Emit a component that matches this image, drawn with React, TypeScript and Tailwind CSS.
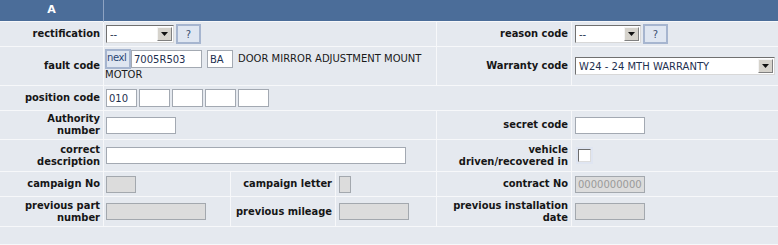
import React from "react";

const font = "font-['DejaVu_Sans',Verdana,sans-serif]";
const cellBase = "bg-[#e5e9ef] border-b border-[#f7f8fa]";
const labelCls = `${cellBase} border-r flex items-center justify-end text-right pr-[3px] font-['DejaVu_Sans_Condensed','DejaVu_Sans',sans-serif] text-[11px] font-bold leading-[12px] text-[#161616]`;
const valueCls = `${cellBase} border-r flex items-center pl-[2px]`;

function Label({ children, span = "" }: { children: React.ReactNode; span?: string }) {
  return <div className={`${labelCls} ${span}`}>{children}</div>;
}

function Value({ children, span = "", last = false, cls = "" }: { children?: React.ReactNode; span?: string; last?: boolean; cls?: string }) {
  return <div className={`${valueCls} ${span} ${last ? "border-r-0 pl-[3px]" : ""} ${cls}`}>{children}</div>;
}

function Select({ value, width }: { value: string; width: string }) {
  return (
    <div className={`${width} flex h-[18px] items-stretch border border-t-[#707070] border-l-[#707070] border-r-[#d8d8d8] border-b-[#d8d8d8] bg-white`}>
      <div className="flex flex-1 items-center overflow-hidden whitespace-nowrap pl-[3px] text-[#1e3050]">{value}</div>
      <div className="m-[1px] flex w-[15px] items-center justify-center border border-t-[#f4f4f4] border-l-[#f4f4f4] border-r-[#808080] border-b-[#808080] bg-[#d6d3cc]">
        <svg width="7" height="4" viewBox="0 0 7 4"><path d="M0 0h7L3.5 4z" fill="#111" /></svg>
      </div>
    </div>
  );
}

function HelpBtn({ cls = "" }: { cls?: string }) {
  return (
    <div className={`flex h-[20px] w-[25px] items-center justify-center border-2 border-[#a6b5cf] bg-[#dfe6f1] text-[#3a4e70] ${cls}`}>
      ?
    </div>
  );
}

function Field({ w, value = "", disabled = false, h = "h-[17px]" }: { w: string; value?: string; disabled?: boolean; h?: string }) {
  return (
    <input
      readOnly
      value={value}
      className={`${w} ${h} ${font} overflow-hidden border px-[2px] text-[10px] outline-none ${
        disabled ? "border-[#a3a8ae] bg-[#dcdcdc] text-[#9a9a9a]" : "border-[#a3a9b2] bg-white text-[#1e3050]"
      }`}
    />
  );
}

export default function App() {
  return (
    <div className={`${font} w-[778px] h-[245px] overflow-hidden bg-[#f7f8fa] text-[10px]`}>
      <div className="grid grid-cols-[104px_127px_105px_101px_135px_206px] grid-rows-[22px_25px_39px_25px_29px_32px_25px_30px_18px]">
        {/* header */}
        <div className="flex items-center justify-center border-r border-b border-r-[#8ea3c2] border-b-[#f7f8fa] bg-[#4b6d99] text-[11px] font-bold text-white">A</div>
        <div className="col-span-5 border-b border-[#f7f8fa] bg-[#4b6d99]" />

        {/* rectification */}
        <Label>rectification</Label>
        <Value span="col-span-3">
          <Select value="--" width="w-[68px]" />
          <HelpBtn cls="ml-[2px]" />
        </Value>
        <Label>reason code</Label>
        <Value last>
          <Select value="--" width="w-[66px]" />
          <HelpBtn cls="ml-[2px]" />
        </Value>

        {/* fault code */}
        <Label>fault code</Label>
        <Value span="col-span-3" cls="!block pt-[2px] pr-[2px] !pl-[1px]">
          <div className="leading-[12px]">
            <span className="inline-flex items-center align-middle">
              <span className="flex h-[20px] w-[26px] items-start overflow-hidden whitespace-nowrap border-2 border-[#a6b5cf] bg-[#dfe6f1] pt-[1px] tracking-[-0.4px] text-[#2a4575]">nexl</span>
              <Field w="w-[71px]" value="7005R503" h="h-[18px]" />
              <span className="ml-[5px]"><Field w="w-[26px]" value="BA" h="h-[18px]" /></span>
            </span>
            <span className="ml-[5px] align-middle text-[#1a1a1a]">DOOR MIRROR ADJUSTMENT MOUNT MOTOR</span>
          </div>
        </Value>
        <Label>Warranty code</Label>
        <Value last>
          <Select value="W24 - 24 MTH WARRANTY" width="w-[200px]" />
        </Value>

        {/* position code */}
        <Label>position code</Label>
        <Value span="col-span-5" last cls="!pl-[2px] gap-[2px]">
          <Field w="w-[31px]" value="010" h="h-[18px]" />
          <Field w="w-[31px]" h="h-[18px]" />
          <Field w="w-[31px]" h="h-[18px]" />
          <Field w="w-[31px]" h="h-[18px]" />
          <Field w="w-[31px]" h="h-[18px]" />
        </Value>

        {/* authority */}
        <Label>Authority<br />number</Label>
        <Value span="col-span-3">
          <Field w="w-[70px]" />
        </Value>
        <Label>secret code</Label>
        <Value last>
          <Field w="w-[70px]" />
        </Value>

        {/* correct description */}
        <Label>correct<br />description</Label>
        <Value span="col-span-3">
          <Field w="w-[300px]" />
        </Value>
        <Label>vehicle<br />driven/recovered in</Label>
        <Value last>
          <div className="ml-[1px] flex h-[17px] w-[17px] items-center justify-center bg-[#dfe5f1]">
            <div className="h-[13px] w-[13px] border border-t-[#6e6e6e] border-l-[#6e6e6e] border-r-[#dcdcdc] border-b-[#dcdcdc] bg-white" />
          </div>
        </Value>

        {/* campaign */}
        <Label>campaign No</Label>
        <Value>
          <Field w="w-[30px]" disabled />
        </Value>
        <Label>campaign letter</Label>
        <Value cls="pl-[3px]">
          <Field w="w-[12px]" disabled />
        </Value>
        <Label>contract No</Label>
        <Value last>
          <Field w="w-[70px]" value="00000000000" disabled />
        </Value>

        {/* previous */}
        <Label>previous part<br />number</Label>
        <Value>
          <Field w="w-[100px]" disabled />
        </Value>
        <Label>previous mileage</Label>
        <Value cls="pl-[3px]">
          <Field w="w-[70px]" disabled />
        </Value>
        <Label>previous installation<br />date</Label>
        <Value last>
          <Field w="w-[70px]" disabled />
        </Value>

        {/* empty footer row */}
        <div className={`${cellBase} col-span-6`} />
      </div>
    </div>
  );
}
